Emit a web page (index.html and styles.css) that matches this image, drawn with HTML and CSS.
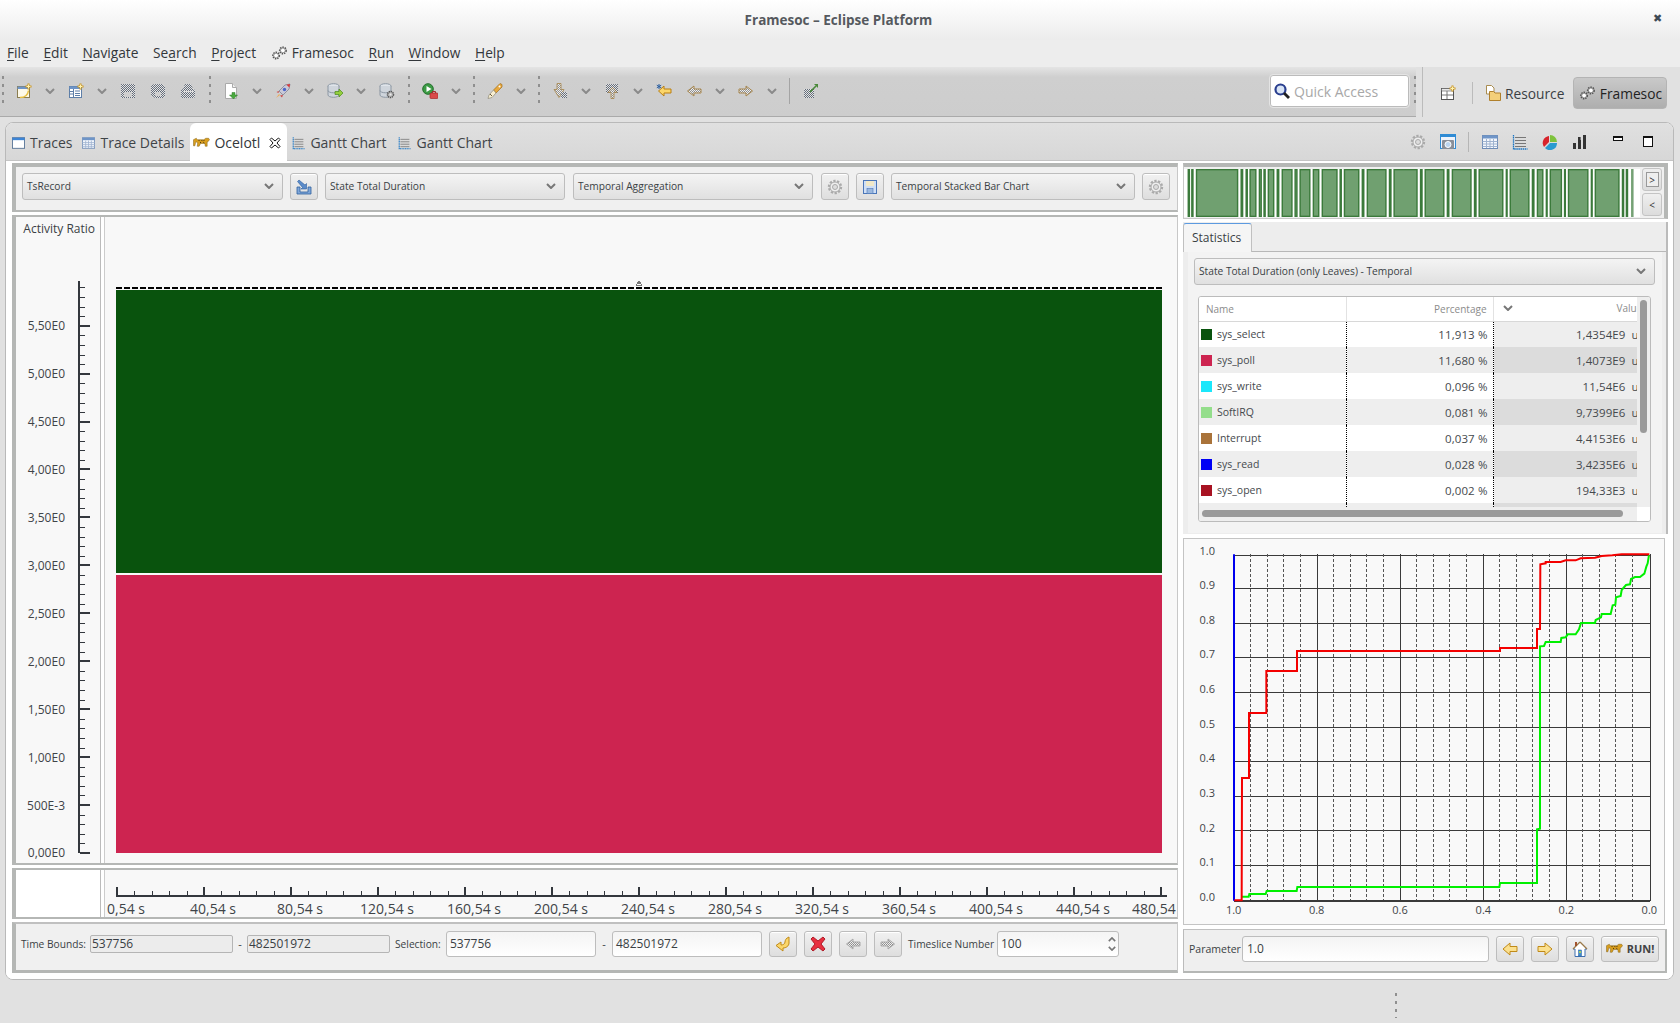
FILE: index.html
```html
<!DOCTYPE html>
<html lang="en">
<head>
<meta charset="utf-8">
<title>Framesoc – Eclipse Platform</title>
<link rel="stylesheet" href="styles.css">
</head>
<body>
<svg class="defs" width="0" height="0" aria-hidden="true">
  <defs>
    <pattern id="dith" width="2" height="2" patternUnits="userSpaceOnUse"><rect width="2" height="2" fill="#e4e4e4"/><rect width="1" height="1" fill="#5f6a78"/><rect x="1" y="1" width="1" height="1" fill="#6e7480"/></pattern>
    <pattern id="dithw" width="2" height="2" patternUnits="userSpaceOnUse"><rect width="2" height="2" fill="#eee"/><rect width="1" height="1" fill="#8b8b8b"/><rect x="1" y="1" width="1" height="1" fill="#9a9a9a"/></pattern>
    <symbol id="i-newwin" viewBox="0 0 16 16"><rect x="1.5" y="3.5" width="12" height="11" fill="#fdf9e8" stroke="#8a7d50"/><rect x="1.5" y="3.5" width="12" height="2.5" fill="#6f95c8"/><path d="M4 14.5c5 0 8-3 8.5-7" fill="none" stroke="#e8c040" stroke-width="1.5"/><path d="M12.500 .5v6M9.500 3.500h6" stroke="#c9941e" stroke-width="2"/><path d="M12.500 1.500v4M10.500 3.500h4" stroke="#fff3b0"/></symbol>
    <symbol id="i-newtbl" viewBox="0 0 16 16"><rect x="1.500" y="3.500" width="12" height="11" fill="#fff" stroke="#5e7fa8"/><rect x="1.500" y="3.500" width="12" height="2.500" fill="#6f95c8"/><path d="M5.500 6v8M7 8h5M7 10.500h5M7 12.500h5M2 8.500h3M2 11h3" stroke="#5e7fa8"/><path d="M12.500 .5v6M9.500 3.500h6" stroke="#c9941e" stroke-width="2"/><path d="M12.500 1.500v4M10.500 3.500h4" stroke="#fff3b0"/></symbol>
    <symbol id="i-save" viewBox="0 0 16 16"><rect x="1" y="1" width="14" height="14" fill="url(#dith)"/><rect x="4" y="9" width="8" height="5" fill="#cfcfcf"/></symbol>
    <symbol id="i-saveall" viewBox="0 0 16 16"><path d="M1 3l3-2h8l3 3v9l-2 2H5l-4-3z" fill="url(#dith)"/><rect x="5" y="9" width="6" height="4" fill="#cfcfcf"/></symbol>
    <symbol id="i-print" viewBox="0 0 16 16"><path d="M5 1h6l2 5H3z" fill="url(#dith)"/><path d="M1 7l2-1h10l2 1v7l-1 1H2l-1-1z" fill="url(#dith)"/><rect x="3" y="8" width="10" height="1" fill="#dcdcdc"/></symbol>
    <symbol id="i-newdoc" viewBox="0 0 16 16"><path d="M2.500 .5h7l4 4v11h-11z" fill="#fff" stroke="#aaa"/><path d="M9.500 .5v4h4" fill="#eee" stroke="#aaa"/><path d="M9 9.500h3v2.500h2.500L10.500 16l-4-4H9z" fill="#4aa83e" stroke="#2f7a2a" stroke-width=".5"/></symbol>
    <symbol id="i-rocket" viewBox="0 0 16 16"><path d="M15 1l-5 1-6 6 4 4 6-6z" fill="#c9c9d8" stroke="#77778a" stroke-width=".7"/><path d="M15 1l-3.500.7 2.800 2.800z" fill="#d33"/><circle cx="9.500" cy="6.500" r="1.700" fill="#4c66c8"/><path d="M4 8L1.500 9l2 1zM8 12l-1 2.500-2-2z" fill="#c44"/><path d="M4 11l-3 4 4-3z" fill="#ea5"/></symbol>
    <symbol id="i-dbin" viewBox="0 0 16 16"><ellipse cx="6.500" cy="3" rx="5.500" ry="2.300" fill="#dfe4ea" stroke="#8c97a3"/><path d="M1 3v9c0 1.300 2.500 2.300 5.500 2.300s5.500-1 5.500-2.300V3" fill="#cfd5dc" stroke="#8c97a3"/><path d="M1 7.500c0 1.300 2.500 2.300 5.500 2.300s5.500-1 5.500-2.300" fill="none" stroke="#8c97a3"/><path d="M8 8.500h4V6l4 4-4 4v-2.500H8z" fill="#94cf3e" stroke="#4c8a1d" stroke-width=".7"/></symbol>
    <symbol id="i-dbgear" viewBox="0 0 16 16"><ellipse cx="6.500" cy="3" rx="5.500" ry="2.300" fill="#dfe4ea" stroke="#8c97a3"/><path d="M1 3v9c0 1.300 2.500 2.300 5.500 2.300s5.500-1 5.500-2.300V3" fill="#cfd5dc" stroke="#8c97a3"/><path d="M1 7.500c0 1.300 2.500 2.300 5.500 2.300s5.500-1 5.500-2.300" fill="none" stroke="#8c97a3"/><circle cx="11.500" cy="11.500" r="3" fill="#bbb" stroke="#555" stroke-width="1.500" stroke-dasharray="1.300 .7"/><circle cx="11.500" cy="11.500" r="1" fill="#eee"/></symbol>
    <symbol id="i-run" viewBox="0 0 16 16"><circle cx="6" cy="6" r="5.300" fill="#3c9b45" stroke="#23702c"/><path d="M4.500 3l5 3-5 3z" fill="#fff"/><rect x="8" y="10" width="8" height="5.500" rx="1" fill="#d94a4a" stroke="#a52a2a" stroke-width=".7"/><path d="M10.500 10V8.500h3V10" fill="none" stroke="#a52a2a"/></symbol>
    <symbol id="i-pen" viewBox="0 0 16 16"><path d="M15 1.500L13 .5 6.500 7l2.500 3 6-6z" fill="#e8a83c" stroke="#a2701c" stroke-width=".7"/><path d="M6.500 7L2 12l-1 3.500 4-1 4-4.500z" fill="#f8efd2" stroke="#8f8a77" stroke-width=".7"/><path d="M3 11l2 2" stroke="#6b5a3a"/><circle cx="12.500" cy="3.500" r="1" fill="#fff"/></symbol>
    <symbol id="i-annd" viewBox="0 0 16 16"><path d="M5 .5h4v6h3l-5 8-5-8h3z" fill="url(#dithw)" stroke="#a6854b" stroke-width=".8"/><rect x="9" y="9" width="6" height="6" fill="url(#dith)"/></symbol>
    <symbol id="i-annu" viewBox="0 0 16 16"><rect x="2" y="1" width="12" height="9" fill="url(#dith)"/><path d="M7 15.500h3v-6h3l-4.500-5L4 9.500h3z" fill="url(#dithw)" stroke="#a6854b" stroke-width=".8"/></symbol>
    <symbol id="i-lastedit" viewBox="0 0 16 16"><path d="M15 6H8V3L2.500 8 8 13v-3h7z" fill="#fbd66a" stroke="#b97f12"/><path d="M3 1v5M.8 2.200l4.400 2.600M.8 4.800l4.400-2.600" stroke="#2a5ea0"/></symbol>
    <symbol id="i-back" viewBox="0 0 16 16"><path d="M15 6H8V3L1.500 8 8 13v-3h7z" fill="url(#dithw)" stroke="#a8874e"/></symbol>
    <symbol id="i-fwd" viewBox="0 0 16 16"><path d="M1 6h7V3l6.500 5L8 13v-3H1z" fill="url(#dithw)" stroke="#a8874e"/></symbol>
    <symbol id="i-pin" viewBox="0 0 16 16"><rect x="1" y="6" width="10" height="9" fill="url(#dith)"/><path d="M7 9l6-6" stroke="#4a8a3a" stroke-width="1.600"/><path d="M11 1h4v4z" fill="#4a8a3a"/></symbol>
    <symbol id="i-gears" viewBox="0 0 20 18"><circle cx="6" cy="12" r="3.800" fill="none" stroke="#555" stroke-width="1.800" stroke-dasharray="1.700 1.100"/><circle cx="6" cy="12" r="2.800" fill="#fff" stroke="#555" stroke-width=".7"/><circle cx="14" cy="6" r="3.800" fill="none" stroke="#555" stroke-width="1.800" stroke-dasharray="1.700 1.100"/><circle cx="14" cy="6" r="2.800" fill="#fff" stroke="#555" stroke-width=".7"/></symbol>
    <symbol id="i-search" viewBox="0 0 16 16"><circle cx="6.500" cy="6.500" r="5" fill="#d8e4f6" stroke="#2a3f8f" stroke-width="2.200"/><path d="M10 10l5 5" stroke="#222" stroke-width="2.800"/></symbol>
    <symbol id="i-persp" viewBox="0 0 16 16"><rect x="1.500" y="3.500" width="12" height="11" fill="#fff" stroke="#555"/><rect x="1.500" y="3.500" width="12" height="2.500" fill="#e8e8e8" stroke="#555" stroke-width=".6"/><path d="M7 6v8M2 10h11" stroke="#777"/><path d="M12.500 .5v6M9.500 3.500h6" stroke="#c9941e" stroke-width="2"/><path d="M12.500 1.500v4M10.500 3.500h4" stroke="#fff3b0"/></symbol>
    <symbol id="i-res" viewBox="0 0 16 16"><path d="M1.500 .5h5l2.500 2.500v6h-7.500z" fill="#fff" stroke="#a98c50"/><path d="M4.500 6.500h4l1.500 1.500h5.500v7.500h-11z" fill="#f3cf7a" stroke="#b0802c"/></symbol>
    <symbol id="i-win" viewBox="0 0 16 16"><rect x=".5" y="1.500" width="15" height="13" fill="#fff" stroke="#46668c"/><rect x=".5" y="1.500" width="15" height="3" fill="#3d85d6"/></symbol>
    <symbol id="i-table" viewBox="0 0 16 16"><rect x=".5" y="1.500" width="15" height="13" fill="#f4f7fc" stroke="#6f8cb6"/><rect x=".5" y="1.500" width="15" height="3" fill="#6f95c8"/><path d="M.5 7.500h15M.5 10h15M.5 12.500h15M4.500 5v9M8 5v9M11.500 5v9" stroke="#9fb3d0"/></symbol>
    <symbol id="i-gantt" viewBox="0 0 16 16"><path d="M1.500 1v14h14" fill="none" stroke="#1b76c4" stroke-width="1.300" stroke-dasharray="1.500 .6"/><path d="M3 3.500h11M3 6.500h11M3 9.500h11M3 12.500h11" stroke="#777"/></symbol>
    <symbol id="i-tiger" viewBox="0 0 18 11"><path d="M.5 2.500l3-1.500 1 1.500h7l2 -1.500h3l1 1.500-1.500 2-1 .5v4.500h-2l-.5-3H8l-1.500 3h-2l.5-3.500L3 4.500l-1 4.500H.5z" fill="#d99e1d" stroke="#7a5a12" stroke-width=".5"/><path d="M6 3l1 1M9 3l1 1M12 3l-1 1M7.500 5l1 1M11 5.500l1 .5" stroke="#402a05"/></symbol>
    <symbol id="i-close" viewBox="0 0 12 12"><path d="M1 2.500L2.500 1 6 4 9.500 1 11 2.500 8 6l3 3.500L9.500 11 6 8l-3.500 3L1 9.500 4 6z" fill="#fff" stroke="#111"/></symbol>
    <symbol id="i-gear" viewBox="0 0 16 16"><circle cx="8" cy="8" r="6" fill="none" stroke="#aaa" stroke-width="2.400" stroke-dasharray="2.200 1.500"/><circle cx="8" cy="8" r="5" fill="#eee" stroke="#aaa"/><circle cx="8" cy="8" r="2.500" fill="#ddd" stroke="#aaa"/></symbol>
    <symbol id="i-camera" viewBox="0 0 16 16"><rect x=".5" y=".5" width="15" height="14" fill="#eef3fb" stroke="#2f8bd4"/><rect x=".5" y=".5" width="15" height="2.500" fill="#2f8bd4"/><rect x="2" y="6" width="12" height="9" rx="1" fill="#8a8f98"/><circle cx="8" cy="10.500" r="3" fill="#bcd5ef" stroke="#fff"/></symbol>
    <symbol id="i-pie" viewBox="0 0 16 16"><path d="M8 1a7 7 0 0 1 7 7H8z" fill="#7ec23c"/><path d="M7 2a7 7 0 0 0-5 11l5-5z" fill="#d7242c"/><path d="M15 9a7 7 0 0 1-12 5l5-5z" fill="#2a9ad0"/></symbol>
    <symbol id="i-bars" viewBox="0 0 16 16"><path d="M1 9h3v6H1zM6 6h3v9H6zM11 1h3v14h-3z" fill="#333"/><rect x="6" y="3" width="2.600" height="12" fill="#333"/></symbol>
    <symbol id="i-import" viewBox="0 0 16 16"><path d="M1 8h3v5h8V8h3v7H1z" fill="#7fa6d8" stroke="#2f5f9e" stroke-width=".8"/><path d="M3 1l6 5 1.500-1.500V10H5l1.500-1.500-5-6z" fill="#5c8cca" stroke="#2f5f9e" stroke-width=".6"/></symbol>
    <symbol id="i-floppy" viewBox="0 0 16 16"><rect x="1.500" y="1.500" width="13" height="13" fill="#cfdff5" stroke="#4a76b8"/><rect x="4" y="2" width="8" height="5" fill="#f0e8c8"/><rect x="5" y="9.500" width="6" height="5" fill="#9bb8de" stroke="#4a76b8" stroke-width=".6"/></symbol>
    <symbol id="i-undo" viewBox="0 0 16 16"><path d="M14 1v6c0 3-3 5-6 5v3L1 9.500 6 6v3c2 0 4-1 4-3 0-1.500 1-4 4-5z" fill="#fbd66a" stroke="#c08a18"/></symbol>
    <symbol id="i-redx" viewBox="0 0 16 16"><path d="M3 1l5 4 5-4 2 2-4 5 4 5-2 2-5-4-5 4-2-2 4-5-4-5z" fill="#e83040" stroke="#b01c28"/></symbol>
    <symbol id="i-gback" viewBox="0 0 16 16"><path d="M15 6H8V3L1.500 8 8 13v-3h7z" fill="url(#dithw)" stroke="#aaa"/></symbol>
    <symbol id="i-gfwd" viewBox="0 0 16 16"><path d="M1 6h7V3l6.500 5L8 13v-3H1z" fill="url(#dithw)" stroke="#aaa"/></symbol>
    <symbol id="i-yback" viewBox="0 0 16 16"><path d="M15 5.500H8V2L1 8l7 6v-3.500h7z" fill="#fbe08e" stroke="#c08a18"/></symbol>
    <symbol id="i-yfwd" viewBox="0 0 16 16"><path d="M1 5.500h7V2l7 6-7 6v-3.500H1z" fill="#fbe08e" stroke="#c08a18"/></symbol>
    <symbol id="i-home" viewBox="0 0 16 16"><path d="M8 1l7 7h-2v7.500H3V8H1z" fill="#fff" stroke="#3f6fb0"/><path d="M8 1L1 8M8 1l7 7" stroke="#9a7a4a" stroke-width="1.300"/><rect x="3" y="1" width="2" height="4" fill="#a0522d"/><rect x="6.500" y="9" width="3" height="6" fill="#3f8fd0" stroke="#2a5ea0" stroke-width=".5"/><rect x="7.300" y="10" width="1.400" height="2" fill="#cde838"/></symbol>
    <symbol id="i-chev" viewBox="0 0 10 6"><path d="M1 1l4 4 4-4" fill="none" stroke="currentColor" stroke-width="2"/></symbol>
  </defs>
</svg>

<header class="titlebar">
  <span class="title">Framesoc – Eclipse Platform</span>
  <span class="winclose">✖</span>
</header>

<nav class="menubar">
  <span><u>F</u>ile</span>
  <span><u>E</u>dit</span>
  <span><u>N</u>avigate</span>
  <span>Se<u>a</u>rch</span>
  <span><u>P</u>roject</span>
  <span class="mi-icon"><svg class="ic-gears"><use href="#i-gears"/></svg>Framesoc</span>
  <span><u>R</u>un</span>
  <span><u>W</u>indow</span>
  <span><u>H</u>elp</span>
</nav>

<div class="toolrow">
  <div class="toolbar">
    <i class="grip grip-first"></i>
    <span class="ti"><svg><use href="#i-newwin"/></svg></span><span class="ch"><svg><use href="#i-chev"/></svg></span>
    <span class="ti"><svg><use href="#i-newtbl"/></svg></span><span class="ch"><svg><use href="#i-chev"/></svg></span>
    <span class="ti"><svg><use href="#i-save"/></svg></span>
    <span class="ti"><svg><use href="#i-saveall"/></svg></span>
    <span class="ti"><svg><use href="#i-print"/></svg></span>
    <i class="grip"></i>
    <span class="ti"><svg><use href="#i-newdoc"/></svg></span><span class="ch"><svg><use href="#i-chev"/></svg></span>
    <span class="ti"><svg><use href="#i-rocket"/></svg></span><span class="ch"><svg><use href="#i-chev"/></svg></span>
    <span class="ti"><svg><use href="#i-dbin"/></svg></span><span class="ch"><svg><use href="#i-chev"/></svg></span>
    <span class="ti"><svg><use href="#i-dbgear"/></svg></span>
    <i class="grip"></i>
    <span class="ti"><svg><use href="#i-run"/></svg></span><span class="ch"><svg><use href="#i-chev"/></svg></span>
    <i class="grip"></i>
    <span class="ti"><svg><use href="#i-pen"/></svg></span><span class="ch"><svg><use href="#i-chev"/></svg></span>
    <i class="grip"></i>
    <span class="ti"><svg><use href="#i-annd"/></svg></span><span class="ch"><svg><use href="#i-chev"/></svg></span>
    <span class="ti"><svg><use href="#i-annu"/></svg></span><span class="ch"><svg><use href="#i-chev"/></svg></span>
    <span class="ti"><svg><use href="#i-lastedit"/></svg></span>
    <span class="ti"><svg><use href="#i-back"/></svg></span><span class="ch"><svg><use href="#i-chev"/></svg></span>
    <span class="ti"><svg><use href="#i-fwd"/></svg></span><span class="ch"><svg><use href="#i-chev"/></svg></span>
    <i class="tsep"></i>
    <span class="ti"><svg><use href="#i-pin"/></svg></span>
    <div class="quick"><svg class="ic16"><use href="#i-search"/></svg><span>Quick Access</span></div>
    <i class="grip grip-last"></i>
  </div>
  <div class="persp">
    <span class="persp-new"><svg class="ic16"><use href="#i-persp"/></svg></span>
    <i class="psep"></i>
    <span class="persp-item"><svg class="ic16"><use href="#i-res"/></svg>Resource</span>
    <span class="persp-item persp-on"><svg class="ic-gears"><use href="#i-gears"/></svg>Framesoc</span>
  </div>
</div>

<main class="workbench">
  <div class="tabbar">
    <span class="tab tab-traces"><svg class="ic14"><use href="#i-win"/></svg>Traces</span>
    <span class="tab tab-details"><svg class="ic14"><use href="#i-table"/></svg>Trace Details</span>
    <span class="tab tab-active"><svg class="ic-tiger"><use href="#i-tiger"/></svg>Ocelotl<svg class="ic-close"><use href="#i-close"/></svg></span>
    <span class="tab tab-g1"><svg class="ic14"><use href="#i-gantt"/></svg>Gantt Chart</span>
    <span class="tab tab-g2"><svg class="ic14"><use href="#i-gantt"/></svg>Gantt Chart</span>
    <div class="viewtools">
      <svg class="vt vt-gear"><use href="#i-gear"/></svg>
      <svg class="vt"><use href="#i-camera"/></svg>
      <i class="vsep"></i>
      <svg class="vt"><use href="#i-table"/></svg>
      <svg class="vt"><use href="#i-gantt"/></svg>
      <svg class="vt"><use href="#i-pie"/></svg>
      <svg class="vt"><use href="#i-bars"/></svg>
      <span class="vmin"></span>
      <span class="vmax"></span>
    </div>
  </div>

  <div class="wbody">
    <section class="leftcol">
      <div class="combos">
        <div class="combo combo-a"><span>TsRecord</span><svg class="cchev"><use href="#i-chev"/></svg></div>
        <button class="btn btn-sq"><svg class="ic16"><use href="#i-import"/></svg></button>
        <div class="combo combo-b"><span>State Total Duration</span><svg class="cchev"><use href="#i-chev"/></svg></div>
        <div class="combo combo-c"><span>Temporal Aggregation</span><svg class="cchev"><use href="#i-chev"/></svg></div>
        <button class="btn btn-sq"><svg class="ic16"><use href="#i-gear"/></svg></button>
        <button class="btn btn-sq"><svg class="ic16"><use href="#i-floppy"/></svg></button>
        <div class="combo combo-d"><span>Temporal Stacked Bar Chart</span><svg class="cchev"><use href="#i-chev"/></svg></div>
        <button class="btn btn-sq"><svg class="ic16"><use href="#i-gear"/></svg></button>
      </div>

      <div class="sashrow chartrow">
        <div class="yaxis">
          <div class="ytitle">Activity Ratio</div>
          <svg class="yaxis-svg" viewBox="0 0 84 630" width="84" height="630">
            <path d="M63 49V621" stroke="#33373d" stroke-width="2"/>
            <path d="M64 611h5M64 602h5M64 592h5M64 583h5M64 563h5M64 554h5M64 544h5M64 535h5M64 516h5M64 506h5M64 496h5M64 487h5M64 468h5M64 458h5M64 448h5M64 439h5M64 420h5M64 410h5M64 400h5M64 391h5M64 372h5M64 362h5M64 352h5M64 343h5M64 324h5M64 314h5M64 305h5M64 295h5M64 276h5M64 266h5M64 257h5M64 247h5M64 228h5M64 218h5M64 209h5M64 199h5M64 180h5M64 171h5M64 161h5M64 151h5M64 132h5M64 123h5M64 113h5M64 103h5M64 84h5M64 75h5M64 65h5M64 55h5" stroke="#33373d" stroke-width="1" shape-rendering="crispEdges"/>
            <path d="M64 621h10M64 573h10M64 525h10M64 477h10M64 429h10M64 381h10M64 333h10M64 285h10M64 237h10M64 190h10M64 142h10M64 94h10" stroke="#33373d" stroke-width="2" shape-rendering="crispEdges"/>
            <g class="axt" text-anchor="end">
              <text x="49" y="98">5,50E0</text><text x="49" y="146">5,00E0</text><text x="49" y="194">4,50E0</text><text x="49" y="242">4,00E0</text><text x="49" y="290">3,50E0</text><text x="49" y="338">3,00E0</text><text x="49" y="386">2,50E0</text><text x="49" y="434">2,00E0</text><text x="49" y="482">1,50E0</text><text x="49" y="530">1,00E0</text><text x="49" y="578">500E-3</text><text x="49" y="625">0,00E0</text>
            </g>
          </svg>
        </div>
        <div class="vsash"></div>
        <div class="stackchart">
          <svg class="marker" viewBox="0 0 8 5" width="8" height="5"><path d="M3 0h2v1h1v2h1v2H1V3h1V1h1z" fill="#777"/><rect x="2" y="3" width="4" height="1" fill="#fff"/></svg>
          <div class="dash"></div>
          <div class="seg seg-green"></div>
          <div class="seg seg-red"></div>
        </div>
      </div>

      <div class="sashrow axisrow">
        <div class="corner"></div>
        <div class="vsash"></div>
        <svg class="timeaxis" viewBox="0 0 1070 47" width="1070" height="47">
          <path d="M10 25.500H1061" stroke="#33373d" stroke-width="2" fill="none" shape-rendering="crispEdges"/>
          <path d="M11 17v8M98 17v8M185 17v8M272 17v8M359 17v8M446 17v8M533 17v8M620 17v8M707 17v8M794 17v8M881 17v8M968 17v8M1055 17v8" stroke="#33373d" stroke-width="2" shape-rendering="crispEdges"/>
          <path d="M28 21v4M46 21v4M63 21v4M81 21v4M115 21v4M133 21v4M150 21v4M168 21v4M202 21v4M220 21v4M237 21v4M255 21v4M289 21v4M307 21v4M324 21v4M342 21v4M376 21v4M394 21v4M411 21v4M429 21v4M463 21v4M481 21v4M498 21v4M516 21v4M550 21v4M568 21v4M585 21v4M603 21v4M637 21v4M655 21v4M672 21v4M690 21v4M724 21v4M742 21v4M759 21v4M777 21v4M811 21v4M829 21v4M846 21v4M864 21v4M898 21v4M916 21v4M933 21v4M951 21v4M985 21v4M1003 21v4M1020 21v4M1038 21v4" stroke="#33373d" stroke-width="1" shape-rendering="crispEdges"/>
          <g class="axt axt-time" text-anchor="middle">
            <text x="20" y="44">0,54 s</text><text x="107" y="44">40,54 s</text><text x="194" y="44">80,54 s</text><text x="281" y="44">120,54 s</text><text x="368" y="44">160,54 s</text><text x="455" y="44">200,54 s</text><text x="542" y="44">240,54 s</text><text x="629" y="44">280,54 s</text><text x="716" y="44">320,54 s</text><text x="803" y="44">360,54 s</text><text x="890" y="44">400,54 s</text><text x="977" y="44">440,54 s</text><text x="1053" y="44">480,54 s</text>
          </g>
        </svg>
      </div>

      <div class="sashrow boundsrow">
        <label class="lbl lbl-tb">Time Bounds:</label>
        <div class="field field-ro">537756</div>
        <span class="dashlbl">-</span>
        <div class="field field-ro">482501972</div>
        <label class="lbl lbl-sel">Selection:</label>
        <div class="field field-in">537756</div>
        <span class="dashlbl dash2">-</span>
        <div class="field field-in">482501972</div>
        <button class="btn btn-b btn-first"><svg class="ic16"><use href="#i-undo"/></svg></button>
        <button class="btn btn-b"><svg class="ic16"><use href="#i-redx"/></svg></button>
        <button class="btn btn-b"><svg class="ic16"><use href="#i-gback"/></svg></button>
        <button class="btn btn-b"><svg class="ic16"><use href="#i-gfwd"/></svg></button>
        <label class="lbl lbl-ts">Timeslice Number</label>
        <div class="field field-spin"><span>100</span><span class="spin"><svg><use href="#i-chev"/></svg><svg><use href="#i-chev"/></svg></span></div>
      </div>
    </section>

    <aside class="rightcol">
      <div class="thumb">
        <svg class="thumb-bars" viewBox="178 0 1276 143" preserveAspectRatio="none" width="456" height="48">
          <g fill="#70a070" stroke="#3b7a3b" stroke-width="4">
            <rect x="190" y="2" width="3" height="139"/><rect x="200" y="2" width="3" height="139"/><rect x="213" y="2" width="115" height="139"/><rect x="338" y="2" width="4" height="139"/><rect x="352" y="2" width="3" height="139"/><rect x="363" y="2" width="16" height="139"/><rect x="389" y="2" width="5" height="139"/><rect x="402" y="2" width="3" height="139"/><rect x="414" y="2" width="15" height="139"/><rect x="439" y="2" width="4" height="139"/><rect x="453" y="2" width="27" height="139"/><rect x="489" y="2" width="5" height="139"/><rect x="503" y="2" width="27" height="139"/><rect x="540" y="2" width="15" height="139"/><rect x="565" y="2" width="41" height="139"/><rect x="615" y="2" width="3" height="139"/><rect x="627" y="2" width="40" height="139"/><rect x="677" y="2" width="4" height="139"/><rect x="691" y="2" width="52" height="139"/><rect x="753" y="2" width="4" height="139"/><rect x="766" y="2" width="64" height="139"/><rect x="840" y="2" width="4" height="139"/><rect x="853" y="2" width="52" height="139"/><rect x="915" y="2" width="4" height="139"/><rect x="929" y="2" width="52" height="139"/><rect x="991" y="2" width="4" height="139"/><rect x="1004" y="2" width="66" height="139"/><rect x="1080" y="2" width="2" height="139"/><rect x="1091" y="2" width="52" height="139"/><rect x="1153" y="2" width="4" height="139"/><rect x="1167" y="2" width="15" height="139"/><rect x="1192" y="2" width="2" height="139"/><rect x="1203" y="2" width="31" height="139"/><rect x="1243" y="2" width="2" height="139"/><rect x="1254" y="2" width="54" height="139"/><rect x="1318" y="2" width="2" height="139"/><rect x="1329" y="2" width="66" height="139"/><rect x="1405" y="2" width="3" height="139"/><rect x="1416" y="2" width="3" height="139"/><rect x="1431" y="2" width="3" height="139" opacity=".7"/>
          </g>
        </svg>
        <div class="thumb-btns">
          <button class="tbtn"><span class="tbtn-in">&gt;</span></button>
          <button class="tbtn">&lt;</button>
        </div>
      </div>

      <div class="stats">
        <div class="statstabs"><span class="stattab">Statistics</span></div>
        <div class="statspane">
          <div class="combo combo-stats"><span>State Total Duration (only Leaves) - Temporal</span><svg class="cchev"><use href="#i-chev"/></svg></div>
          <div class="tblwrap">
            <div class="tblclip">
              <table class="stable">
                <colgroup><col class="c-name"><col class="c-pct"><col class="c-val"></colgroup>
                <thead>
                  <tr><th class="th-name">Name</th><th class="th-pct">Percentage</th><th class="th-val"><svg class="th-chev"><use href="#i-chev"/></svg><span class="th-valtxt">Value</span></th></tr>
                </thead>
                <tbody>
                  <tr><td class="name"><i class="sw sw1"></i>sys_select</td><td class="num">11,913 %</td><td class="val"><span>1,4354E9</span><b>us</b></td></tr>
                  <tr><td class="name"><i class="sw sw2"></i>sys_poll</td><td class="num">11,680 %</td><td class="val"><span>1,4073E9</span><b>us</b></td></tr>
                  <tr><td class="name"><i class="sw sw3"></i>sys_write</td><td class="num">0,096 %</td><td class="val"><span>11,54E6</span><b>us</b></td></tr>
                  <tr><td class="name"><i class="sw sw4"></i>SoftIRQ</td><td class="num">0,081 %</td><td class="val"><span>9,7399E6</span><b>us</b></td></tr>
                  <tr><td class="name"><i class="sw sw5"></i>Interrupt</td><td class="num">0,037 %</td><td class="val"><span>4,4153E6</span><b>us</b></td></tr>
                  <tr><td class="name"><i class="sw sw6"></i>sys_read</td><td class="num">0,028 %</td><td class="val"><span>3,4235E6</span><b>us</b></td></tr>
                  <tr><td class="name"><i class="sw sw7"></i>sys_open</td><td class="num">0,002 %</td><td class="val"><span>194,33E3</span><b>us</b></td></tr>
                  <tr class="partial"><td class="name"></td><td class="num"></td><td class="val"></td></tr>
                </tbody>
              </table>
            </div>
            <div class="vscroll"><span class="vthumb"></span></div>
            <div class="hscroll"><span class="hthumb"></span></div>
            <div class="scrollcorner"></div>
          </div>
        </div>
      </div>

      <div class="rocpanel">
        <svg class="roc" viewBox="9 24 1446 1161" width="482" height="387">
          <g stroke="#3a3a3a" stroke-width="3" shape-rendering="crispEdges">
            <path d="M162 75H1411M162 175H1411M162 280H1411M162 382H1411M162 487H1411M162 592H1411M162 694H1411M162 799H1411M162 901H1411M162 1006H1411"/>
            <path d="M412 73V1112M661 73V1112M910 73V1112M1160 73V1112M1410 73V1112"/>
            <path d="M212 73V1112M262 73V1112M310 73V1112M362 73V1112M461 73V1112M511 73V1112M560 73V1112M610 73V1112M710 73V1112M760 73V1112M808 73V1112M859 73V1112M958 73V1112M1009 73V1112M1057 73V1112M1108 73V1112M1207 73V1112M1258 73V1112M1306 73V1112M1357 73V1112" stroke="#555" stroke-dasharray="9 6"/>
            <path d="M162 1112H1411" stroke-width="6"/>
          </g>
          <path d="M162 73V1112" stroke="#0000ee" stroke-width="6" fill="none"/>
          <path d="M186 1100H206L208 1092H257L260 1083H350L352 1071H958L960 1059H1071V898L1080 896V349L1092 348L1097 336H1142L1144 324L1157 322L1163 313H1187L1197 298L1203 279H1245L1247 270L1263 262L1265 252H1292L1298 226L1306 224L1308 202L1322 198L1325 180L1338 165L1350 163L1353 147L1365 141H1380L1393 131L1399 110L1403 100L1407 75" fill="none" stroke="#00f000" stroke-width="6"/>
          <path d="M163 1111H185L186 744H207V549H259V423H351V363H960V354H1071V297H1080L1081 103L1097 100V96H1142L1157 91H1187L1202 85L1245 83L1265 78L1297 76L1325 73H1408" fill="none" stroke="#f40000" stroke-width="6"/>
          <g class="roct" text-anchor="end">
            <text x="105" y="75">1.0</text><text x="105" y="177">0.9</text><text x="105" y="282">0.8</text><text x="105" y="385">0.7</text><text x="105" y="489">0.6</text><text x="105" y="594">0.5</text><text x="105" y="697">0.4</text><text x="105" y="802">0.3</text><text x="105" y="907">0.2</text><text x="105" y="1009">0.1</text><text x="105" y="1113">0.0</text>
          </g>
          <g class="roct" text-anchor="middle">
            <text x="161" y="1152">1.0</text><text x="410" y="1152">0.8</text><text x="660" y="1152">0.6</text><text x="910" y="1152">0.4</text><text x="1159" y="1152">0.2</text><text x="1408" y="1152">0.0</text>
          </g>
        </svg>
      </div>

      <div class="parambar">
        <label class="lbl lbl-param">Parameter</label>
        <div class="field field-param">1.0</div>
        <button class="btn btn-p"><svg class="ic16"><use href="#i-yback"/></svg></button>
        <button class="btn btn-p"><svg class="ic16"><use href="#i-yfwd"/></svg></button>
        <button class="btn btn-p"><svg class="ic16"><use href="#i-home"/></svg></button>
        <button class="btn btn-run"><svg class="ic-tiger"><use href="#i-tiger"/></svg>RUN!</button>
      </div>
    </aside>
  </div>
</main>

<footer class="statusbar"><i class="grip grip-status"></i></footer>
</body>
</html>
```

FILE: styles.css
```css
* { box-sizing: border-box; }
html, body { margin: 0; padding: 0; }
body {
  width: 1680px; height: 1023px; overflow: hidden;
  background: #e1e1e1; color: #3a3f44;
  font-family: "Open Sans", "Noto Sans", sans-serif;
  font-size: 14px;
}
.defs { position: absolute; }
svg { display: block; flex: none; }
i { display: block; font-style: normal; }
button { font-family: inherit; padding: 0; margin: 0; color: inherit; }

/* Title */
.titlebar {
  height: 40px; display: flex; align-items: center; justify-content: center;
  background: linear-gradient(#fff, #ececec); position: relative;
}
.title { font-weight: 700; font-size: 13.5px; color: #55595e; margin-left: -3px; }
.winclose { position: absolute; left: 1653px; top: 10px; font-size: 11px; color: #3f4a55; }

/* Menu */
.menubar {
  height: 27px; display: flex; align-items: center; gap: 14.6px; padding: 0 0 2px 7px;
  background: #ededed; color: #33373b; font-size: 13.75px;
}
.menubar u { text-underline-offset: 2px; }
.mi-icon { display: flex; align-items: center; gap: 4px; }
.ic-gears { width: 17px; height: 16px; }

/* Toolbar */
.toolrow { height: 50px; display: flex; }
.toolbar {
  width: 1416px; display: flex; align-items: center; padding: 10px 0 11px 9px;
  background: linear-gradient(#e4e4e4 0, #cfcfcf 10px, #cdcdcd 100%);
  border-bottom: 1px solid #aaa; color: #8a8a8a;
}
.ti { width: 30px; height: 28px; display: flex; align-items: center; justify-content: center; }
.ti svg { width: 16px; height: 16px; }
.ch { width: 22px; height: 28px; display: flex; align-items: center; justify-content: center; }
.ch svg { width: 10px; height: 6px; }
.grip {
  width: 2px; height: 30px; margin: 0 5.5px;
  background: repeating-linear-gradient(#8f8f8f 0 3px, transparent 3px 8px);
}
.grip-first { margin: 0 5px 0 -7px; }
.grip-last { margin: 0 0 0 5px; }
.tsep { width: 1px; height: 26px; margin: 0 6px; background: #a4a4a4; }
.quick {
  width: 139px; height: 32px; margin-left: auto;
  display: flex; align-items: center; gap: 4px; padding-left: 3px;
  background: #fff; border: 1px solid #bbb; border-radius: 3px; outline: 1px solid #e4e4e4;
  color: #a8a8a8; font-size: 14px;
}
.ic16 { width: 16px; height: 16px; }
.persp {
  flex: 1; display: flex; align-items: center; padding: 10px 0 8px 0; position: relative;
  border-left: 1px solid #bbb; margin-left: 6px; color: #3a3f44; font-size: 13.75px;
}
.persp-new { width: 49px; display: flex; justify-content: center; }
.psep { width: 1px; height: 22px; background: #bbb; margin-right: 12px; }
.persp-item { display: flex; align-items: center; gap: 4px; height: 32px; }
.persp-on {
  margin-left: 9px; width: 94px; justify-content: center; gap: 4px; color: #222;
  border: 1px solid #b4b4b4; border-radius: 4px; background: linear-gradient(#c9c9c9, #aeaeae);
}

/* Workbench */
.workbench {
  height: 858px; margin: 5px 6px 0 5px;
  background: #fff; border: 1px solid #b9b9b9; border-radius: 8px;
  display: flex; flex-direction: column; overflow: hidden;
}
.tabbar {
  height: 38px; flex: none; display: flex; align-items: center; position: relative;
  background: linear-gradient(#e0e0e0, #d7d7d7); border-bottom: 1px solid #c4c4c4;
}
.tab { display: flex; align-items: center; gap: 5px; height: 100%; color: #3f4448; padding-top: 2px; }
.ic14 { width: 13px; height: 14px; }
.tab-traces { margin-left: 6px; }
.tab-details { margin-left: 10px; }
.tab-active {
  margin-left: 6px; width: 97px; padding-left: 3px; gap: 4px; background: #fff;
  border-radius: 6px 6px 0 0; color: #33373b; height: 38px;
}
.ic-tiger { width: 17px; height: 11px; }
.ic-close { width: 12px; height: 12px; margin-left: 5px; }
.tab-g1 { margin-left: 5px; }
.tab-g2 { margin-left: 12px; }
.viewtools { margin-left: auto; display: flex; align-items: center; padding-right: 20px; }
.vt { width: 16px; height: 16px; margin-left: 14px; }
.vsep { width: 1px; height: 20px; background: #b5b5b5; margin-left: 12px; margin-right: -1px; }
.vmin { width: 10px; height: 5px; margin-left: 25px; background: #fff; border: 1px solid #111; border-top-width: 2px; margin-top: -6px; }
.vmax { width: 10px; height: 11px; margin-left: 20px; background: #fff; border: 1px solid #111; border-top-width: 2px; }

.wbody { flex: 1; display: flex; padding: 2px 0 0 6px; gap: 5px; background: #fff; min-height: 0; }
.leftcol { width: 1166px; display: flex; flex-direction: column; gap: 3px; }
.rightcol { width: 485px; display: flex; flex-direction: column; }

.combos {
  height: 49px; flex: none; display: flex; gap: 8px; align-items: flex-start; padding: 6px 0 0 6px;
  background: #f0f0f0; border-left: 4px solid #b5b7b5; border-top: 4px solid #b5b7b5; border-bottom: 2px solid #b5b7b5;
  border-right: 1px solid #c8c8c8;
}
.combo {
  height: 27px; display: flex; align-items: center; justify-content: space-between; padding: 0 5px 2px 4px;
  border: 1px solid #bdbdbd; border-radius: 3px; background: linear-gradient(#f4f4f4, #e0e0e0);
  font-size: 10.2px; color: #3a3f44; white-space: nowrap;
}
.cchev { width: 10px; height: 6px; color: #777; margin-right: 3px; }
.combo-a { width: 261px; }
.combo-b { width: 240px; }
.combo-c { width: 240px; }
.combo-d { width: 244px; margin-right: -1px; }
.btn {
  display: flex; align-items: center; justify-content: center;
  border: 1px solid #bdbdbd; border-radius: 3px; background: linear-gradient(#f1f1f1, #dedede);
  box-shadow: inset 0 1px 0 #fff;
}
.btn-sq { width: 28px; height: 27px; margin-right: -1px; }
.combo-a + .btn-sq { margin-left: -1px; }

.sashrow { display: flex; flex: none; border-left: 4px solid #b5b7b5; border-right: 1px solid #c8c8c8; }
.chartrow { height: 650px; border-top: 2px solid #b5b7b5; border-bottom: 2px solid #b5b7b5; }
.yaxis { width: 84px; background: #f8f8f8; display: flex; flex-direction: column; overflow: hidden; }
.ytitle { height: 16px; margin-top: 4px; margin-bottom: -5px; font-size: 12px; line-height: 16px; text-align: right; padding-right: 5px; color: #3a3f44; flex: none; white-space: nowrap; }
.vsash { width: 5px; flex: none; background: #fff; border-left: 1px solid #bbb; border-right: 1px solid #ccc; }
.axt text { font-size: 12px; fill: #3f4448; font-family: "Open Sans", sans-serif; }
.axt-time text { font-size: 14px; }
.stackchart { flex: 1; background: #f8f8f8; padding: 70px 15px 0 11px; display: flex; flex-direction: column; position: relative; }
.marker { position: absolute; left: 530px; top: 64px; }
.dash { height: 2px; flex: none; background: repeating-linear-gradient(90deg, #000 0 6px, transparent 6px 8px); margin-bottom: 1px; }
.seg { flex: none; }
.seg-green { height: 283px; background: #09530d; margin-bottom: 2px; }
.seg-red { height: 278px; background: #cd2450; }

.axisrow { height: 51px; border-top: 2px solid #b5b7b5; border-bottom: 2px solid #b5b7b5; }
.corner { width: 84px; background: #fff; }
.timeaxis { background: #f8f8f8; flex: 1; }

.boundsrow {
  height: 51px; align-items: center; padding: 0 0 7px 5px; background: #f0f0f0;
  border-top: 2px solid #c0c0c0; border-bottom: 3px solid #b5b7b5;
}
.lbl { font-size: 10.2px; color: #3a3f44; white-space: nowrap; }
.lbl-tb { width: 69px; }
.field { font-size: 12px; color: #3a3f44; display: flex; align-items: center; padding-left: 2px; }
.field-ro { width: 143px; height: 18px; padding-left: 1px; border: 1px solid #b5b5b5; border-radius: 2px; background: #ececec; }
.dashlbl { width: 14px; text-align: center; font-size: 11px; }
.lbl-sel { width: 51px; margin-left: 5px; }
.field-in {
  width: 150px; height: 26px; padding-left: 3px; border: 1px solid #bdbdbd; border-radius: 3px;
  background: linear-gradient(#f4f4f4, #fff);
}
.dash2 { width: 16px; }
.btn-b { width: 28px; height: 26px; margin-left: 7px; }
.lbl-ts { margin-left: 6px; width: 89px; }
.field-spin { width: 122px; justify-content: space-between; height: 26px; padding: 0 2px 0 3px; border: 1px solid #bdbdbd; border-radius: 3px; background: linear-gradient(#f4f4f4, #fff); }
.spin { display: flex; flex-direction: column; gap: 4px; color: #777; }
.spin svg { width: 8px; height: 5px; }
.spin svg:first-child { transform: scaleY(-1); }

/* Right column */
.thumb {
  height: 56px; flex: none; display: flex; background: #f0f0f0;
  border-top: 4px solid #b5b7b5; border-right: 4px solid #b5b7b5; border-left: 1px solid #c8c8c8; border-bottom: 1px solid #c8c8c8;
}
.thumb-bars { background: #fff; margin-top: 2px; margin-right: 1px; height: 48px; }
.thumb-btns { display: flex; flex-direction: column; gap: 2px; margin-left: 1px; width: 20px; padding-top: 1px; }
.tbtn { flex: none; height: 23px; width: 20px; border: 1px solid #c4c4c4; border-radius: 3px; background: linear-gradient(#efefef, #dcdcdc); font-size: 10px; color: #333; display: flex; align-items: center; justify-content: center; }
.tbtn-in { border: 1px solid #999; width: 13px; height: 15px; display: flex; align-items: center; justify-content: center; background: #eee; }

.stats { height: 312px; flex: none; margin-top: 3px; background: #ededed; border-right: 2px solid #bbb; display: flex; flex-direction: column; }
.statstabs { height: 29px; flex: none; margin-top: 1px; border-bottom: 1px solid #b8b8b8; display: flex; }
.stattab {
  width: 69px; height: 29px; padding: 5px 0 0 8px; font-size: 12px; color: #3a3f44; background: #f5f5f5;
  border: 1px solid #c0c0c0; border-top: 1px solid #5c9ae0; border-bottom: 0; border-radius: 3px 3px 0 0;
}
.statspane { flex: 1; margin: 0 4px 1px 5px; background: #f3f3f3; padding: 6px 6px 0 6px; min-height: 0; }
.combo-stats { width: 461px; }
.tblwrap {
  width: 453px; height: 226px; margin: 11px 0 0 4px; display: grid; grid-template-columns: 1fr 13px; grid-template-rows: 1fr 14px;
  border: 1px solid #bbb; border-radius: 3px; background: #fff; overflow: hidden;
}
.tblclip { overflow: hidden; min-height: 0; min-width: 0; }
.stable { border-collapse: collapse; table-layout: fixed; width: 460px; font-size: 10.5px; color: #45494d; }
.c-name { width: 147px; }
.c-pct { width: 147px; }
.c-val { width: 166px; }
.stable th { height: 24px; font-weight: 400; font-size: 10px; color: #8b8b8b; border-bottom: 1px solid #d8d8d8; border-right: 1px solid #e2e2e2; padding: 0; background: #fff; }
.stable th.th-name { text-align: left; padding-left: 7px; }
.stable th.th-pct { text-align: right; padding-right: 6px; }
.th-val { position: relative; text-align: left; }
.th-chev { position: absolute; left: 9px; top: 8px; width: 10px; height: 6px; color: #777; }
.th-valtxt { position: absolute; left: 123px; top: 4px; }
.stable td { height: 26px; padding: 0; background: #fff; white-space: nowrap; overflow: hidden; border-right: 1px dotted #000; }
.stable td.name { padding-left: 2px; }
.stable td.val { background: #eeeeee; border-right: 0; font-size: 11.5px; letter-spacing: .1px; }
.stable td.num { text-align: right; padding-right: 5px; font-size: 11.5px; letter-spacing: .1px; }
.stable tr:nth-child(even) td { background: #eeeeee; }
.stable tr:nth-child(even) td.val { background: #dcdcdc; }
.stable tr.partial td { height: 6px; }
.val span { display: inline-block; width: 132px; text-align: right; }
.val b { font-weight: 400; margin-left: 6px; }
.sw { display: inline-block; vertical-align: -2px; width: 11px; height: 11px; margin-right: 5px; }
.sw1 { background: #09530d; }
.sw2 { background: #cd2450; }
.sw3 { background: #1be7fb; }
.sw4 { background: #94de8b; }
.sw5 { background: #a9733a; }
.sw6 { background: #0000f5; }
.sw7 { background: #a81222; }
.vscroll { background: #eeeeee; position: relative; padding: 3px 3px 0; }
.vthumb { display: block; height: 133px; width: 7px; border-radius: 4px; background: #9a9a9a; }
.hscroll { background: #eeeeee; padding: 3px 0 0 3px; }
.hthumb { display: block; width: 421px; height: 7px; border-radius: 4px; background: #9a9a9a; }
.scrollcorner { background: #fff; }

.rocpanel { height: 387px; flex: none; margin-top: 4px; width: 482px; background: #f9f9f9; outline: 1px solid #c4c4c4; outline-offset: -1px; }
.roct text { font-size: 33px; fill: #3f4448; font-family: "Open Sans", sans-serif; }

.parambar {
  height: 44px; flex: none; margin-top: 4px; width: 484px; display: flex; align-items: center; padding: 0 0 4px 5px;
  background: #efefef; border-top: 1px solid #c0c0c0; border-left: 1px solid #bbb; border-bottom: 2px solid #b5b7b5; border-right: 2px solid #b5b7b5;
}
.lbl-param { width: 53px; font-size: 10.5px; }
.field-param { width: 247px; height: 26px; padding-left: 4px; border: 1px solid #bdbdbd; border-radius: 3px; background: linear-gradient(#f4f4f4, #fff); }
.btn-p { width: 28px; height: 26px; margin-left: 7px; }
.btn-run { width: 58px; height: 26px; margin-left: 7px; gap: 4px; font-size: 11px; font-weight: 700; color: #444; }

.statusbar { height: 43px; position: relative; background: #e1e1e1; }
.grip-status { position: absolute; left: 1395px; top: 13px; margin: 0; height: 25px; }
```
